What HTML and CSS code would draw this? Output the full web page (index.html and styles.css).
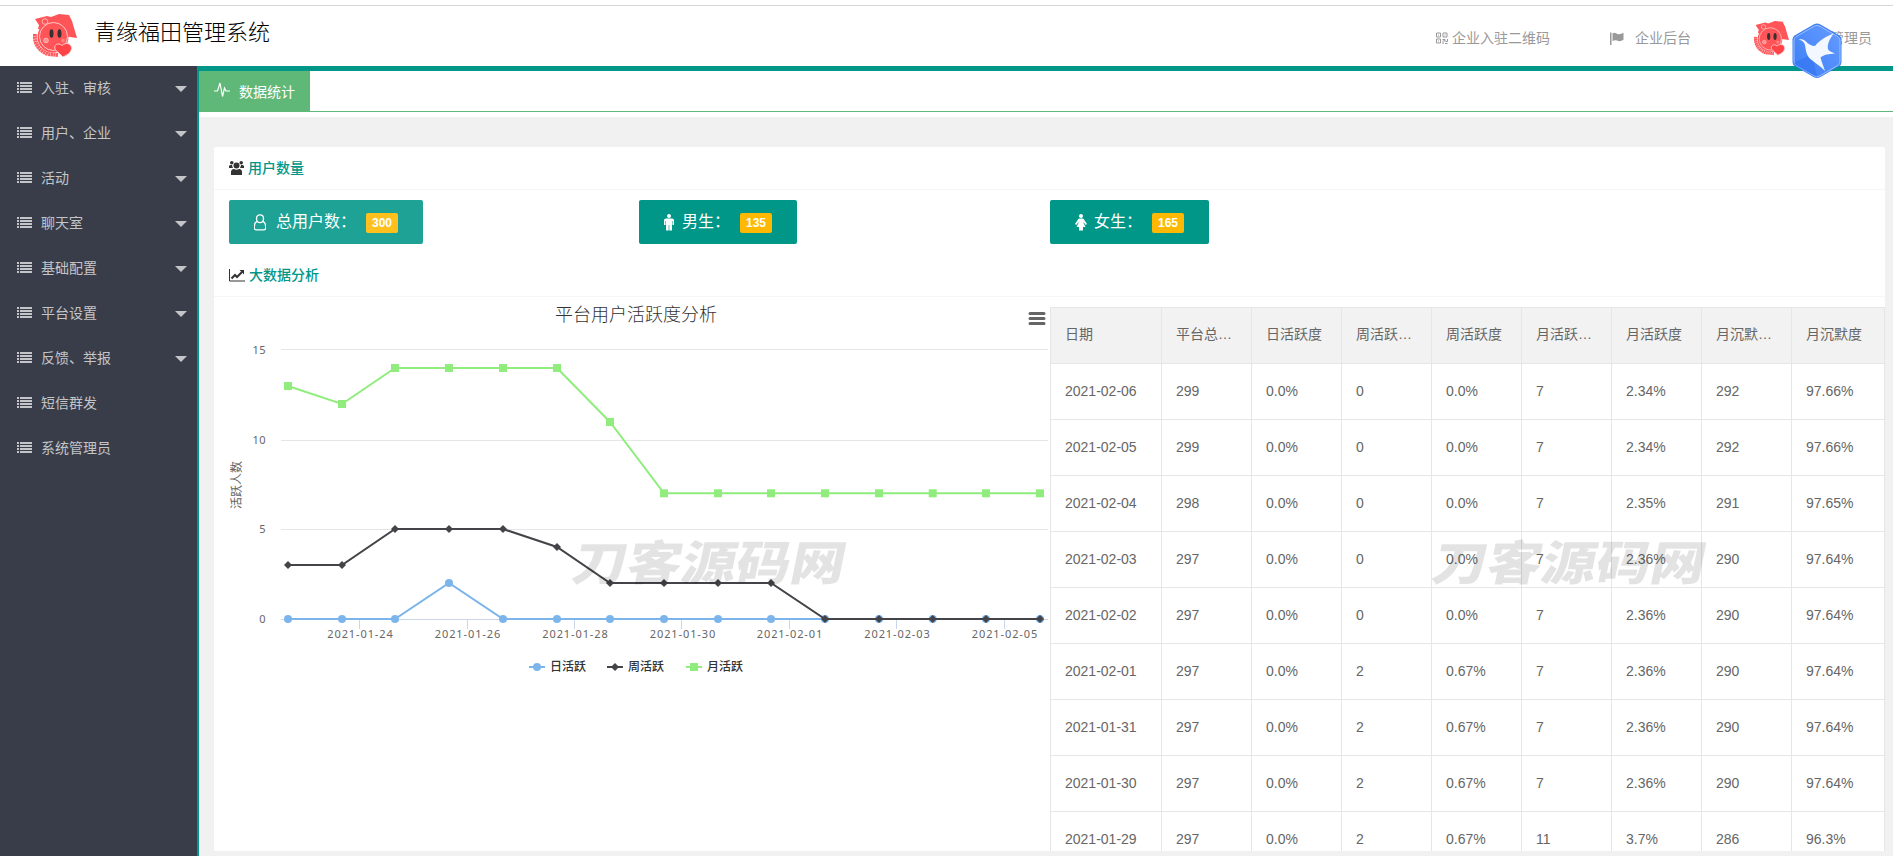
FILE: index.html
```
<!DOCTYPE html>
<html lang="zh-CN">
<head>
    <meta charset="UTF-8">
    <meta name="viewport" content="width=device-width, initial-scale=1.0">
    <title>青缘福田管理系统</title>
    <link rel="stylesheet" href="styles.css">
</head>
<body>
    <svg width="0" height="0" class="defs">
        <symbol id="list" viewBox="0 0 15 12">
            <path d="M0 0h2v2H0zM3 0h12v2H3zM0 3h2v2H0zM3 3h12v2H3zM0 6h2v2H0zM3 6h12v2H3zM0 9h2v2H0zM3 9h12v2H3z"/>
        </symbol>
        <symbol id="logo" viewBox="0 0 44 44">
            <path d="M2 5 14 2l4 1 8-3 10 1 3 6 5 17-7-1-32-8 1-4z" fill="#ff5558"/>
            <circle cx="20" cy="23" r="15.500" fill="#ff5558"/>
            <path d="M2 20c-1 9 4 17 13 20l10 1" fill="none" stroke="#ff5a5d" stroke-width="4" stroke-dasharray="2.200 .4"/>
            <circle cx="20.500" cy="22.500" r="14" fill="none" stroke="#ffc5c5" stroke-width="1"/>
            <circle cx="12" cy="7.500" r="2.800" fill="none" stroke="#ffb5b5"/>
            <circle cx="13" cy="26.500" r="2.300" fill="#ff9295" stroke="#ffb5b5"/>
            <circle cx="30" cy="26.500" r="2" fill="#ff7f82"/>
            <ellipse cx="18.500" cy="19.500" rx="2" ry="4.300" fill="#3b3030"/>
            <ellipse cx="26.500" cy="19.500" rx="2" ry="4.300" fill="#3b3030"/>
            <path d="M30 43 22.500 36c-3-5 3-8 6.500-4.500 4-4 10-1.500 9.500 3C38 39 34 41 30 43z" fill="#ff4347" stroke="#ffd0d0" stroke-width="1"/>
        </symbol>
    </svg>

    <div class="header">
        <svg class="logo"><use href="#logo"/></svg>
        <h1>青缘福田管理系统</h1>
        <div class="links">
            <a class="qr">
                <svg width="12" height="12" viewBox="0 0 12 12" fill="none" stroke="#999">
                    <path d="M.5 1h4v4h-4zM7 1h4v4H7zM.5 7h4v4h-4zM2 3h1M8.500 3h1M2 9h1M6.500 7.500H9V9H6.500M11.500 7v2.500H9.500M7 10v2M9 11.500h2.500"/>
                </svg>
                企业入驻二维码
            </a>
            <a class="flag">
                <svg width="14" height="13" viewBox="0 0 14 13" fill="#999">
                    <path d="M0 .5h1.500V13H0zM2.500 1.500C5-.5 7 2.800 9 2.200c1.800-.2 3-.7 4.500-1.400v7C11.500 9 9.500 9.600 7.500 8.700 5.500 8 4 8.300 2.500 9z"/>
                </svg>
                企业后台
            </a>
            <a class="user">
                <svg class="avatar"><use href="#logo"/></svg>
                管理员
            </a>
        </div>
        <svg class="bird" viewBox="0 0 50 56">
            <defs>
                <linearGradient id="blue" x1="0" y1="1" x2="1" y2="0">
                    <stop offset="0" stop-color="#3c7ff7"/>
                    <stop offset="1" stop-color="#669bff"/>
                </linearGradient>
            </defs>
            <path d="M22 1.200q3-1.500 6 0l19 11q2.500 1.500 2.500 4v23q0 2.500-2.500 4l-19 11q-3 1.500-6 0l-19-11q-2.500-1.500-2.500-4v-23q0-2.500 2.500-4z" fill="#3f80f5"/>
            <path d="M22.500 3q2.500-1.200 5 0l18.500 10.700q2 1.300 2 3.500v21.600q0 2.200-2 3.500L27.500 53q-2.500 1.200-5 0L4 42.300q-2-1.300-2-3.500V17.200q0-2.200 2-3.500z" fill="url(#blue)" stroke="#9cc2ff"/>
            <path d="M2 40 20 31l5 23L4 43z" fill="#2e70ef" opacity=".5"/>
            <path d="M6.500 16.200c3.500-.2 5.500.2 7.500 2.300 2.500 2.800 5.500 4.500 9 4.500 5-6 10.500-9.500 18.500-12.500-4 6-6.500 11-5.500 15.500.5 2 4 3 7 4.500-6.500.5-11 1-14.500 4 1 4.500 3 8.500 4.500 13.500-4.500-5-10-8-14-11.500-5-4-5-9-6-14.500-.7-3-3-4.800-6.500-5.800z" fill="#f3f7ff"/>
        </svg>
    </div>

    <div class="page">
        <ul class="side">
            <li><svg class="ico"><use href="#list"/></svg><span>入驻、审核</span><i class="more"></i></li>
            <li><svg class="ico"><use href="#list"/></svg><span>用户、企业</span><i class="more"></i></li>
            <li><svg class="ico"><use href="#list"/></svg><span>活动</span><i class="more"></i></li>
            <li><svg class="ico"><use href="#list"/></svg><span>聊天室</span><i class="more"></i></li>
            <li><svg class="ico"><use href="#list"/></svg><span>基础配置</span><i class="more"></i></li>
            <li><svg class="ico"><use href="#list"/></svg><span>平台设置</span><i class="more"></i></li>
            <li><svg class="ico"><use href="#list"/></svg><span>反馈、举报</span><i class="more"></i></li>
            <li><svg class="ico"><use href="#list"/></svg><span>短信群发</span></li>
            <li><svg class="ico"><use href="#list"/></svg><span>系统管理员</span></li>
        </ul>

        <div class="main">
            <div class="tabs">
                <div class="tab">
                    <svg width="16" height="16" viewBox="0 0 16 16" fill="none" stroke="#fff" stroke-width="1.200">
                        <path d="M0 9h3.500L6 1l2.500 13.500L10.500 6l1.500 3h4"/>
                    </svg>
                    数据统计
                </div>
            </div>

            <div class="card">
                <div class="card-head">
                    <svg width="15" height="14" viewBox="0 0 15 14" fill="#333">
                        <circle cx="2.800" cy="1.800" r="1.800"/><circle cx="12.200" cy="1.800" r="1.800"/>
                        <circle cx="7.500" cy="4.500" r="3"/>
                        <path d="M0 7V5q.5-1.500 3-1 .2 1.700 1 3zM15 7V5q-.5-1.500-3-1-.2 1.700-1 3zM2 14v-3.500Q2.500 7.500 5 8q2.500 1.300 5 0 2.500-.5 3 2.500V14z"/>
                    </svg>
                    <b>用户数量</b>
                </div>
                <div class="stats">
                    <div>
                        <button class="btn hover">
                            <svg width="12" height="17" viewBox="0 0 12 17" fill="none" stroke="#fff" stroke-width="1.300">
                                <path d="M6 .8c2.300 0 3.500 1.700 3.500 3.700S8.400 8.700 6 8.700 2.500 6.500 2.500 4.500 3.700.8 6 .8zM3 7.200C.8 8.500 0 11 .3 14q.2 1.800 2 1.800h7.400q1.800 0 2-1.800c.3-3-.5-5.500-2.700-6.800"/>
                            </svg><span>总用户数：</span><em>300</em>
                        </button>
                    </div>
                    <div>
                        <button class="btn male">
                            <svg width="10" height="17" viewBox="0 0 10 17" fill="#fff">
                                <circle cx="5" cy="2" r="2"/>
                                <path d="M2 4.500h6q2 0 2 2V11H8.500V7H8v9.500H5.300V11h-.6v5.500H2V7h-.5v4H0V6.500q0-2 2-2z"/>
                            </svg><span>男生：</span><em>135</em>
                        </button>
                    </div>
                    <div>
                        <button class="btn female">
                            <svg width="12" height="17" viewBox="0 0 12 17" fill="#fff">
                                <circle cx="6" cy="2" r="2"/>
                                <path d="M4.500 4.500h3q1 0 1.500 1l3 4.500-1.300 1L8.500 8v1l2 4H8v3.500H4V13H1.500l2-4V8l-2.200 3L0 10l3-4.500q.5-1 1.500-1z"/>
                            </svg><span>女生：</span><em>165</em>
                        </button>
                    </div>
                </div>

                <div class="card-head">
                    <svg width="16" height="13" viewBox="0 0 16 13" fill="none" stroke="#333">
                        <path d="M.5 0v12H16"/>
                        <path d="M2.500 9.500 6 6l2 2 5-5" stroke-width="2"/>
                        <path d="M10.500 1H15v4.500z" fill="#333" stroke="none"/>
                    </svg>
                    <b>大数据分析</b>
                </div>

                <div class="data">
                    <svg class="chart" viewBox="229 297 821 400">
                        <text class="chart-title" x="636" y="321">平台用户活跃度分析</text>
                        <path class="menu" d="M1030 313.500h14M1030 318.500h14M1030 323.500h14"/>
                        <path class="grid" d="M281 349.500h767M281 440.500h767M281 529.500h767"/>
                        <path class="axis" d="M281 619.500h767M359.500 620v9M467.500 620v9M574.500 620v9M681.500 620v9M789.500 620v9M896.500 620v9M1004.500 620v9"/>
                        <g class="ylabel">
                            <text x="266" y="354">15</text>
                            <text x="266" y="444">10</text>
                            <text x="266" y="533">5</text>
                            <text x="266" y="623">0</text>
                        </g>
                        <text class="ytitle" transform="translate(240.500 485) rotate(-90)">活跃人数</text>
                        <g class="xlabel">
                            <text x="360.500" y="638">2021-01-24</text>
                            <text x="468" y="638">2021-01-26</text>
                            <text x="575.500" y="638">2021-01-28</text>
                            <text x="683" y="638">2021-01-30</text>
                            <text x="790" y="638">2021-02-01</text>
                            <text x="897.500" y="638">2021-02-03</text>
                            <text x="1005" y="638">2021-02-05</text>
                        </g>

                        <marker id="dot" markerUnits="userSpaceOnUse" markerWidth="10" markerHeight="10" refX="5" refY="5">
                            <circle cx="5" cy="5" r="4" fill="#7cb5ec"/>
                        </marker>
                        <marker id="diamond" markerUnits="userSpaceOnUse" markerWidth="10" markerHeight="10" refX="5" refY="5">
                            <path d="M5 1 9 5 5 9 1 5z" fill="#434348"/>
                        </marker>
                        <marker id="square" markerUnits="userSpaceOnUse" markerWidth="10" markerHeight="10" refX="5" refY="5">
                            <path d="M1 1h8v8H1z" fill="#90ed7d"/>
                        </marker>
                        <polyline class="day" points="288,619 342,619 395,619 449,583 503,619 557,619 610,619 664,619 718,619 771,619 825,619 879,619 932.700,619 986,619 1040,619"/>
                        <polyline class="week" points="288,565 342,565 395,529 449,529 503,529 557,547 610,583 664,583 718,583 771,583 825,619 879,619 932.700,619 986,619 1040,619"/>
                        <polyline class="month" points="288,386 342,404 395,368 449,368 503,368 557,368 610,422 664,493.300 718,493.300 771,493.300 825,493.300 879,493.300 932.700,493.300 986,493.300 1040,493.300"/>

                        <polyline class="day legend-line" points="529,667 537,667 545,667"/>
                        <polyline class="week legend-line" points="607,667 615,667 623,667"/>
                        <polyline class="month legend-line" points="686,667 694,667 702,667"/>
                        <g class="legend">
                            <text x="550" y="671">日活跃</text>
                            <text x="628" y="671">周活跃</text>
                            <text x="707" y="671">月活跃</text>
                        </g>
                    </svg>

                    <table>
                        <colgroup>
                            <col class="c-date"><col class="c"><col class="c"><col class="c"><col class="c"><col class="c"><col class="c"><col class="c"><col class="c-last">
                        </colgroup>
                        <tr><th>日期</th><th>平台总人数</th><th>日活跃度</th><th>周活跃人数</th><th>周活跃度</th><th>月活跃人数</th><th>月活跃度</th><th>月沉默人数</th><th>月沉默度</th></tr>
                        <tr><td>2021-02-06</td><td>299</td><td>0.0%</td><td>0</td><td>0.0%</td><td>7</td><td>2.34%</td><td>292</td><td>97.66%</td></tr>
                        <tr><td>2021-02-05</td><td>299</td><td>0.0%</td><td>0</td><td>0.0%</td><td>7</td><td>2.34%</td><td>292</td><td>97.66%</td></tr>
                        <tr><td>2021-02-04</td><td>298</td><td>0.0%</td><td>0</td><td>0.0%</td><td>7</td><td>2.35%</td><td>291</td><td>97.65%</td></tr>
                        <tr><td>2021-02-03</td><td>297</td><td>0.0%</td><td>0</td><td>0.0%</td><td>7</td><td>2.36%</td><td>290</td><td>97.64%</td></tr>
                        <tr><td>2021-02-02</td><td>297</td><td>0.0%</td><td>0</td><td>0.0%</td><td>7</td><td>2.36%</td><td>290</td><td>97.64%</td></tr>
                        <tr><td>2021-02-01</td><td>297</td><td>0.0%</td><td>2</td><td>0.67%</td><td>7</td><td>2.36%</td><td>290</td><td>97.64%</td></tr>
                        <tr><td>2021-01-31</td><td>297</td><td>0.0%</td><td>2</td><td>0.67%</td><td>7</td><td>2.36%</td><td>290</td><td>97.64%</td></tr>
                        <tr><td>2021-01-30</td><td>297</td><td>0.0%</td><td>2</td><td>0.67%</td><td>7</td><td>2.36%</td><td>290</td><td>97.64%</td></tr>
                        <tr><td>2021-01-29</td><td>297</td><td>0.0%</td><td>2</td><td>0.67%</td><td>11</td><td>3.7%</td><td>286</td><td>96.3%</td></tr>
                    </table>
                </div>
            </div>
        </div>
    </div>

    <div class="mark mark1">刀客源码网</div>
    <div class="mark mark2">刀客源码网</div>
</body>
</html>
```
FILE: styles.css
```
* {
    margin: 0;
    padding: 0;
    box-sizing: border-box;
}

body {
    height: 856px;
    padding-top: 5px;
    overflow: hidden;
    position: relative;
    background-color: #fff;
    font: 14px/24px "Liberation Sans", "Noto Sans CJK SC", sans-serif;
    color: #333;
}

svg {
    flex: none;
}

.defs {
    position: absolute;
}

/* top bar */
.header {
    position: relative;
    display: flex;
    height: 61px;
    border-top: 1px solid #d8d8d8;
    padding-left: 33px;
}
.logo {
    width: 44px;
    height: 44px;
    margin-top: 8px;
}
h1 {
    margin: 10px 0 0 17px;
    font-size: 22px;
    line-height: 34px;
    font-weight: 300;
    color: #000;
}
.links {
    display: flex;
    margin-left: auto;
    padding-right: 21px;
    color: #999;
}
.links a {
    display: flex;
    align-items: center;
    height: 64px;
}
.qr svg {
    margin-right: 4px;
}
.flag {
    margin-left: 60px;
}
.flag svg {
    margin-right: 11px;
}
.user {
    margin-left: 63px;
}
.avatar {
    width: 35px;
    height: 35px;
    margin-right: 41px;
}
.bird {
    position: absolute;
    z-index: 5;
    right: 51px;
    top: 17px;
    width: 50px;
    height: 56px;
}

.page {
    display: flex;
    height: 790px;
}

/* menu */
.side {
    width: 197px;
    background-color: #393d49;
    list-style: none;
    color: #c4c5c8;
}
.side li {
    display: flex;
    align-items: center;
    height: 45px;
    padding: 0 10px 0 17px;
}
.side span {
    margin-bottom: 2px;
}
.ico {
    width: 15px;
    height: 12px;
    margin: 0 9px 1px 0;
    fill: #c4c5c8;
}
.more {
    margin-left: auto;
    border: 6px solid transparent;
    border-top-color: #c4c5c8;
    border-bottom: 0;
}

.main {
    flex: 1;
    border-left: 2px solid #009688;
    border-top: 5px solid #009688;
    background-color: #f1f1f1;
}
.tabs {
    height: 46px;
    background-color: #fff;
    border-bottom: 5px solid #fff;
    box-shadow: inset 0 -1px #5fb878;
}
.tab {
    display: flex;
    align-items: center;
    width: 111px;
    height: 41px;
    padding-left: 15px;
    background-color: #5fb878;
    color: #fff;
}
.tab svg {
    margin: 0 9px 3px 0;
}

.card {
    height: 704px;
    margin: 30px 8px 0 15px;
    background-color: #fff;
    border-radius: 2px 2px 0 0;
    overflow: hidden;
}
.card-head {
    display: flex;
    align-items: center;
    height: 43px;
    padding-left: 15px;
    border-bottom: 1px solid #f6f6f6;
}
.card-head b {
    margin-left: 4px;
    margin-bottom: 1px;
    font-weight: 500;
    color: #009688;
}

.stats {
    display: flex;
    padding: 10px 0 10px 15px;
}
.stats > div {
    width: 410px;
}
.stats > div:nth-child(2) {
    width: 411px;
}
.btn {
    display: flex;
    align-items: center;
    height: 44px;
    padding: 0 25px;
    border: none;
    border-radius: 2px;
    background-color: #009688;
    font: 16px "Liberation Sans", "Noto Sans CJK SC", sans-serif;
    color: #fff;
}
.btn.hover {
    opacity: .88;
}
.btn svg {
    margin: 0 10px 0 0;
}
.btn.male svg {
    margin-right: 8px;
}
.btn.female svg {
    margin-right: 7px;
}
.btn span {
    line-height: 24px;
    margin-right: 10px;
}
.btn em {
    width: 32px;
    height: 20px;
    margin-top: 2px;
    border-radius: 2px;
    background-color: #ffb800;
    font: bold 12px/20px "Liberation Sans", sans-serif;
    text-align: center;
}

.data {
    display: flex;
    padding-left: 15px;
}

/* line chart */
.chart {
    width: 821px;
    height: 400px;
    font-family: "Noto Sans", "Noto Sans CJK SC", sans-serif;
}
.chart-title {
    font-size: 18px;
    font-weight: 300;
    text-anchor: middle;
    fill: #333;
}
.menu {
    stroke: #666;
    stroke-width: 3;
    stroke-linecap: round;
}
.grid {
    stroke: #e6e6e6;
}
.axis {
    stroke: #ccd6eb;
}
.ylabel, .xlabel {
    font-size: 11px;
    fill: #666;
    letter-spacing: .9px;
    text-anchor: middle;
}
.ylabel {
    text-anchor: end;
    letter-spacing: .5px;
}
.ytitle {
    font-size: 12px;
    fill: #666;
    text-anchor: middle;
}
.day, .week, .month {
    fill: none;
    stroke-width: 2;
}
.day {
    stroke: #7cb5ec;
    marker: url(#dot);
}
.week {
    stroke: #434348;
    marker: url(#diamond);
}
.month {
    stroke: #90ed7d;
    marker: url(#square);
}
.legend-line {
    marker-start: none;
    marker-end: none;
}
.legend {
    font-size: 12px;
    font-weight: 500;
    fill: #333;
}

table {
    width: 835px;
    margin-top: 10px;
    table-layout: fixed;
    border-spacing: 0;
    border-top: 1px solid #e6e6e6;
    border-left: 1px solid #e6e6e6;
    color: #666;
}
.c-date {
    width: 111px;
}
.c {
    width: 90px;
}
.c-last {
    width: 93px;
}
th, td {
    height: 56px;
    padding: 0 15px 1px 14px;
    border-right: 1px solid #e6e6e6;
    border-bottom: 1px solid #e6e6e6;
    overflow: hidden;
    text-overflow: ellipsis;
    white-space: nowrap;
    text-align: left;
    font-weight: 400;
}
th {
    padding-bottom: 3px;
    background-color: #f2f2f2;
}

.mark {
    position: absolute;
    top: 530px;
    font: 900 47px/60px "Noto Sans CJK SC", sans-serif;
    color: rgba(0, 0, 0, .11);
    white-space: nowrap;
    transform-origin: 0 50%;
    transform: scaleX(1.160) skewX(-10deg);
    pointer-events: none;
}
.mark1 {
    left: 574px;
}
.mark2 {
    left: 1434px;
}
```
